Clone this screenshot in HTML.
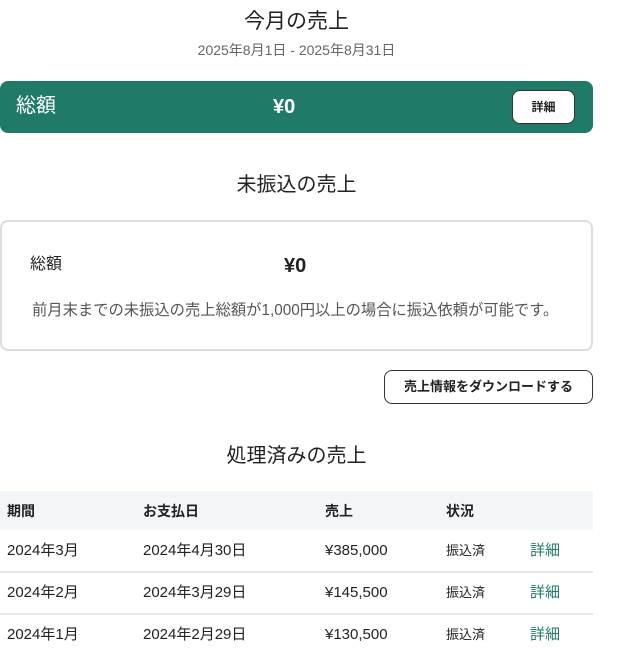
<!DOCTYPE html>
<html><head><meta charset="utf-8"><style>
*{margin:0;padding:0;box-sizing:border-box}
body{width:617px;height:655px;overflow:hidden;background:#fff;font-family:"Liberation Sans","Noto Sans CJK JP",sans-serif;color:#222;position:relative}
.a{position:absolute;line-height:1;white-space:nowrap}
.c{position:absolute;left:0;width:593px;text-align:center;line-height:1}
</style></head><body>
<div class="c" style="top:11px;font-size:21px;">今月の売上</div>
<div class="c" style="top:43px;font-size:14px;color:#666">2025年8月1日 - 2025年8月31日</div>
<div class="a" style="left:0;top:81px;width:593px;height:52px;background:#1f7a68;border-radius:8px"></div>
<div class="a" style="left:16px;top:96px;font-size:20px;color:#fff">総額</div>
<div class="a" style="left:273px;top:97px;font-size:20px;font-weight:bold;color:#fff">¥0</div>
<div class="a" style="left:512px;top:90px;width:63px;height:34px;background:#fff;border:1px solid #333;border-radius:8px;font-size:12px;font-weight:bold;text-align:center;line-height:32px">詳細</div>
<div class="c" style="top:175px;font-size:20px">未振込の売上</div>
<div class="a" style="left:0;top:220px;width:593px;height:131px;border:2px solid #ddd;border-radius:8px"></div>
<div class="a" style="left:30px;top:257px;font-size:16px">総額</div>
<div class="a" style="left:284px;top:256px;font-size:20px;font-weight:bold">¥0</div>
<div class="a" style="left:32px;top:303px;font-size:15.3px;color:#555">前月末までの未振込の売上総額が1,000円以上の場合に振込依頼が可能です。</div>
<div class="a" style="left:384px;top:370px;width:209px;height:34px;border:1px solid #333;border-radius:8px;font-size:13px;font-weight:bold;text-align:center;line-height:32px">売上情報をダウンロードする</div>
<div class="c" style="top:446px;font-size:20px">処理済みの売上</div>
<div class="a" style="left:0;top:491px;width:593px;height:39px;background:#f3f6f9"></div>
<div class="a" style="top:504px;left:7px;font-size:14px;font-weight:bold">期間</div>
<div class="a" style="top:504px;left:143px;font-size:14px;font-weight:bold">お支払日</div>
<div class="a" style="top:504px;left:325px;font-size:14px;font-weight:bold">売上</div>
<div class="a" style="top:504px;left:446px;font-size:14px;font-weight:bold">状況</div>
<div class="a" style="left:0;top:571px;width:593px;height:2px;background:#e8e8e8"></div>
<div class="a" style="left:0;top:613px;width:593px;height:2px;background:#e8e8e8"></div>

<div class="a" style="top:543px;left:7px;font-size:15px">2024年3月</div>
<div class="a" style="top:543px;left:143px;font-size:15px">2024年4月30日</div>
<div class="a" style="top:543px;left:325px;font-size:15px">¥385,000</div>
<div class="a" style="top:544px;left:446px;font-size:13px">振込済</div>
<div class="a" style="top:543px;left:530px;font-size:15px;color:#1f7a68">詳細</div>

<div class="a" style="top:585px;left:7px;font-size:15px">2024年2月</div>
<div class="a" style="top:585px;left:143px;font-size:15px">2024年3月29日</div>
<div class="a" style="top:585px;left:325px;font-size:15px">¥145,500</div>
<div class="a" style="top:586px;left:446px;font-size:13px">振込済</div>
<div class="a" style="top:585px;left:530px;font-size:15px;color:#1f7a68">詳細</div>

<div class="a" style="top:627px;left:7px;font-size:15px">2024年1月</div>
<div class="a" style="top:627px;left:143px;font-size:15px">2024年2月29日</div>
<div class="a" style="top:627px;left:325px;font-size:15px">¥130,500</div>
<div class="a" style="top:628px;left:446px;font-size:13px">振込済</div>
<div class="a" style="top:627px;left:530px;font-size:15px;color:#1f7a68">詳細</div>
</body></html>
